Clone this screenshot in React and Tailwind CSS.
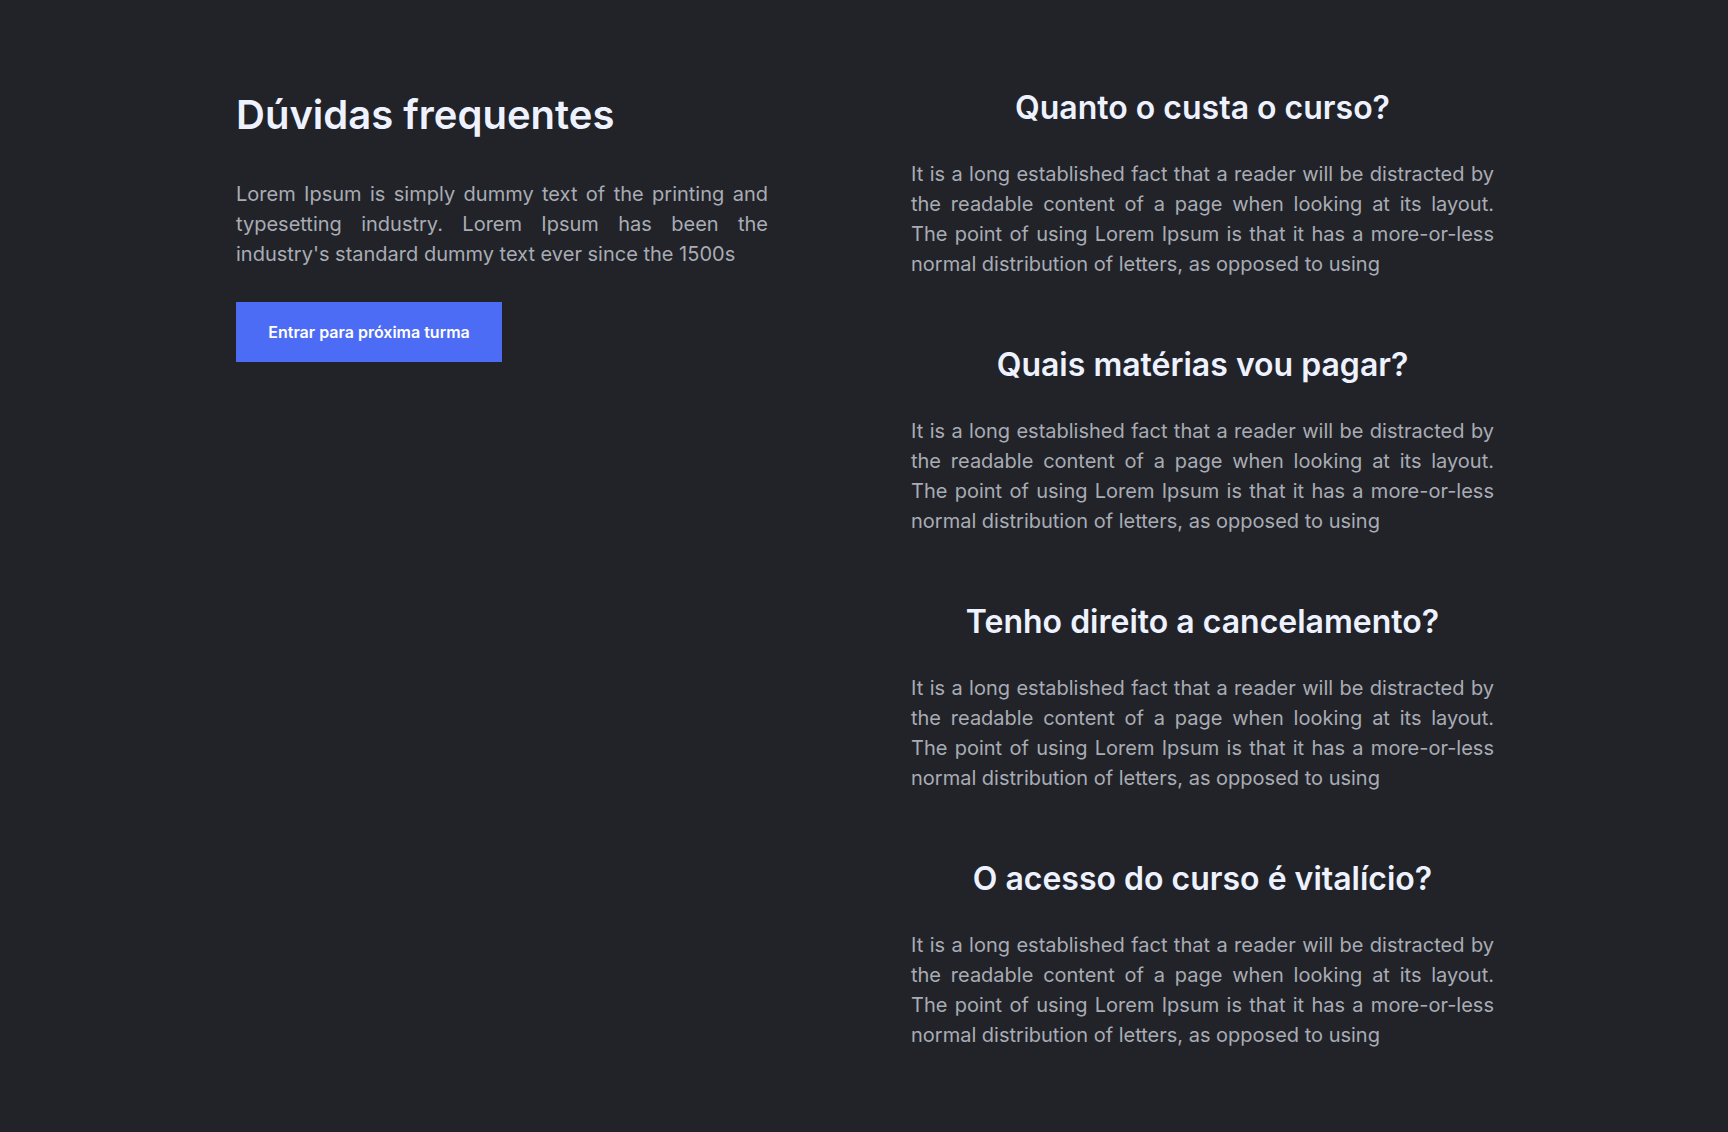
const faqs = [
  'Quanto o custa o curso?',
  'Quais matérias vou pagar?',
  'Tenho direito a cancelamento?',
  'O acesso do curso é vitalício?',
];

const answer =
  'It is a long established fact that a reader will be distracted by the readable content of a page when looking at its layout. The point of using Lorem Ipsum is that it has a more-or-less normal distribution of letters, as opposed to using';

export default function App() {
  return (
    <div className="min-h-screen bg-[#212329] font-['Inter',sans-serif]">
      <div className="ml-[236px] flex w-[1258px] justify-between pt-[90px] pb-[80px]">
        <div className="w-[532px] pt-px">
          <h1 className="text-[40px] leading-[48px] font-semibold text-[#eef2ff]">Dúvidas frequentes</h1>
          <p className="mt-10 text-justify text-[20px] leading-[30px] text-[#a9acb4]">
            Lorem Ipsum is simply dummy text of the printing and typesetting industry. Lorem Ipsum has been the
            industry's standard dummy text ever since the 1500s
          </p>
          <button
            type="button"
            className="mt-[33px] h-[60px] w-[266px] bg-[#4d6cf5] text-[16px] font-semibold text-white"
          >
            Entrar para próxima turma
          </button>
        </div>

        <div className="w-[583px]">
          {faqs.map((q) => (
            <div key={q} className="mb-[68px] last:mb-0">
              <h2 className="text-center text-[32px] leading-9 font-semibold text-[#eef2ff]">{q}</h2>
              <p className="mt-[33px] text-justify text-[20px] leading-[30px] text-[#a9acb4]">{answer}</p>
            </div>
          ))}
        </div>
      </div>
    </div>
  );
}
